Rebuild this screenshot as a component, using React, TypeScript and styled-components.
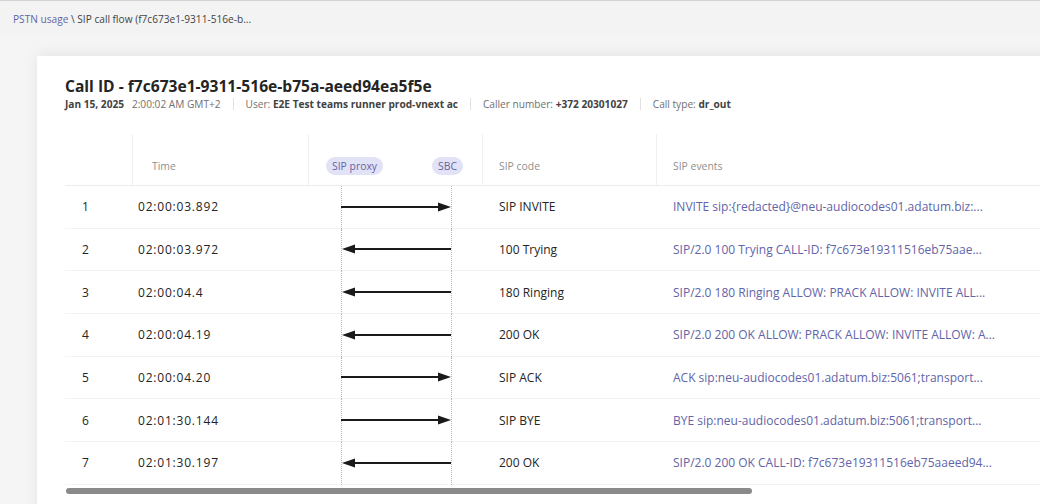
import React from 'react';
import styled, { createGlobalStyle } from 'styled-components';

const GlobalStyle = createGlobalStyle`
  html, body {
    margin: 0;
    padding: 0;
    background: #f5f5f5;
    overflow: hidden;
  }
  body {
    font-family: 'Open Sans', 'Noto Sans', sans-serif;
    color: #242424;
  }
`;

const Page = styled.div`
  width: 1040px;
  height: 504px;
  overflow: hidden;
  background: #f5f5f5;
  border-top: 1px solid #d2d2d2;
  box-sizing: border-box;
`;

const Breadcrumb = styled.div`
  height: 34px;
  padding: 11px 0 0 13px;
  box-sizing: border-box;
  background: #f3f3f3;
  font-size: 10.15px;
  color: #424242;
  white-space: nowrap;
`;

const Crumb = styled.span`
  color: #6264a7;
`;

const Content = styled.div`
  padding: 21px 0 0 37px;
`;

const Card = styled.div`
  width: 1100px;
  height: 520px;
  background: #fff;
  box-shadow: 0 -2px 14px rgba(0, 0, 0, 0.07);
  padding: 21px 0 0 28px;
  box-sizing: border-box;
`;

const Title = styled.h1`
  margin: 0;
  font-size: 15.6px;
  font-weight: 700;
  line-height: 19px;
  color: #242424;
`;

const Meta = styled.div`
  display: flex;
  align-items: center;
  font-size: 10.15px;
  color: #707070;
  line-height: 16px;
  white-space: nowrap;
`;

const MetaItem = styled.span`
  & b {
    color: #424242;
    font-weight: 700;
  }
`;

const Sep = styled.span`
  width: 1px;
  height: 12px;
  background: #e0e0e0;
  margin: 0 12px;
`;

const TableWrap = styled.div`
  margin-top: 22px;
`;

const Row = styled.div<{ $header?: boolean }>`
  display: grid;
  grid-template-columns: 68px 176px 174px 174px 1fr;
  height: ${({ $header }) => ($header ? '52px' : '42.67px')};
  border-bottom: 1px solid ${({ $header }) => ($header ? '#ececec' : '#f3f3f3')};
  box-sizing: border-box;
  font-size: ${({ $header }) => ($header ? '10.4px' : '12px')};
  color: ${({ $header }) => ($header ? '#8f8f8f' : '#242424')};
`;

const Cell = styled.div<{ $pad?: number; $divider?: boolean; $link?: boolean; $wide?: boolean }>`
  display: flex;
  align-items: center;
  padding-left: ${({ $pad }) => $pad ?? 16}px;
  border-right: ${({ $divider }) => ($divider ? '1px solid #f0f0f0' : 'none')};
  color: ${({ $link }) => ($link ? '#6264a7' : 'inherit')};
  letter-spacing: ${({ $wide }) => ($wide ? '0.8px' : 'normal')};
  white-space: nowrap;
  overflow: hidden;
`;

const HeadCell = styled(Cell)`
  padding-top: 12px;
`;

const FlowHead = styled.div`
  display: flex;
  align-items: center;
  justify-content: space-between;
  padding: 12px 19px 0 17px;
  border-right: 1px solid #f0f0f0;
`;

const Pill = styled.span`
  background: #e2e2f6;
  color: #6264a7;
  border-radius: 9px;
  padding: 2px 6px 2px;
  font-size: 10.4px;
  line-height: 14px;
`;

const FlowCell = styled.div`
  position: relative;
  display: flex;
  align-items: center;
`;

const Lane = styled.div<{ $left: number }>`
  position: absolute;
  top: 0;
  bottom: -1px;
  left: ${({ $left }) => $left}px;
  border-left: 1px dotted #b8b8b8;
`;

const Arrow = styled.svg`
  position: absolute;
  left: 32px;
  top: 50%;
  margin-top: -6px;
`;

const Scroll = styled.div`
  margin-top: 3px;
  margin-left: 1px;
  width: 686px;
  height: 6px;
  border-radius: 3px;
  background: #8a8a8a;
`;

type Msg = { time: string; code: string; event: string; dir: 'r' | 'l' };

const rows: Msg[] = [
  { time: '02:00:03.892', code: 'SIP INVITE', event: 'INVITE sip:{redacted}@neu-audiocodes01.adatum.biz:...', dir: 'r' },
  { time: '02:00:03.972', code: '100 Trying', event: 'SIP/2.0 100 Trying CALL-ID: f7c673e19311516eb75aae...', dir: 'l' },
  { time: '02:00:04.4', code: '180 Ringing', event: 'SIP/2.0 180 Ringing ALLOW: PRACK ALLOW: INVITE ALL...', dir: 'l' },
  { time: '02:00:04.19', code: '200 OK', event: 'SIP/2.0 200 OK ALLOW: PRACK ALLOW: INVITE ALLOW: A...', dir: 'l' },
  { time: '02:00:04.20', code: 'SIP ACK', event: 'ACK sip:neu-audiocodes01.adatum.biz:5061;transport...', dir: 'r' },
  { time: '02:01:30.144', code: 'SIP BYE', event: 'BYE sip:neu-audiocodes01.adatum.biz:5061;transport...', dir: 'r' },
  { time: '02:01:30.197', code: '200 OK', event: 'SIP/2.0 200 OK CALL-ID: f7c673e19311516eb75aaeed94...', dir: 'l' },
];

const FlowArrow: React.FC<{ dir: 'r' | 'l' }> = ({ dir }) => (
  <Arrow width="111" height="12" viewBox="0 0 111 12">
    {dir === 'r' ? (
      <>
        <line x1="0" y1="6" x2="100" y2="6" stroke="#1a1a1a" strokeWidth="2" />
        <polygon points="97,1.5 110,6 97,10.5" fill="#1a1a1a" />
      </>
    ) : (
      <>
        <line x1="11" y1="6" x2="110" y2="6" stroke="#1a1a1a" strokeWidth="2" />
        <polygon points="14,1.5 1,6 14,10.5" fill="#1a1a1a" />
      </>
    )}
  </Arrow>
);

const App: React.FC = () => (
  <Page>
    <GlobalStyle />
    <Breadcrumb>
      <Crumb>PSTN usage</Crumb> \ SIP call flow (f7c673e1-9311-516e-b...
    </Breadcrumb>
    <Content>
      <Card>
        <Title>Call ID - f7c673e1-9311-516e-b75a-aeed94ea5f5e</Title>
        <Meta>
          <MetaItem><b>Jan 15, 2025</b>&nbsp;&nbsp; 2:00:02 AM GMT+2</MetaItem>
          <Sep />
          <MetaItem>User: <b>E2E Test teams runner prod-vnext ac</b></MetaItem>
          <Sep />
          <MetaItem>Caller number: <b>+372 20301027</b></MetaItem>
          <Sep />
          <MetaItem>Call type: <b>dr_out</b></MetaItem>
        </Meta>
        <TableWrap>
          <Row $header>
            <HeadCell $divider />
            <HeadCell $pad={19} $divider>Time</HeadCell>
            <FlowHead>
              <Pill>SIP proxy</Pill>
              <Pill>SBC</Pill>
            </FlowHead>
            <HeadCell $divider>SIP code</HeadCell>
            <HeadCell>SIP events</HeadCell>
          </Row>
          {rows.map((r, i) => (
            <Row key={i}>
              <Cell $pad={17}>{i + 1}</Cell>
              <Cell $pad={5} $wide>{r.time}</Cell>
              <FlowCell>
                <Lane $left={32} />
                <Lane $left={142} />
                <FlowArrow dir={r.dir} />
              </FlowCell>
              <Cell>{r.code}</Cell>
              <Cell $link>{r.event}</Cell>
            </Row>
          ))}
          <Scroll />
        </TableWrap>
      </Card>
    </Content>
  </Page>
);

export default App;
